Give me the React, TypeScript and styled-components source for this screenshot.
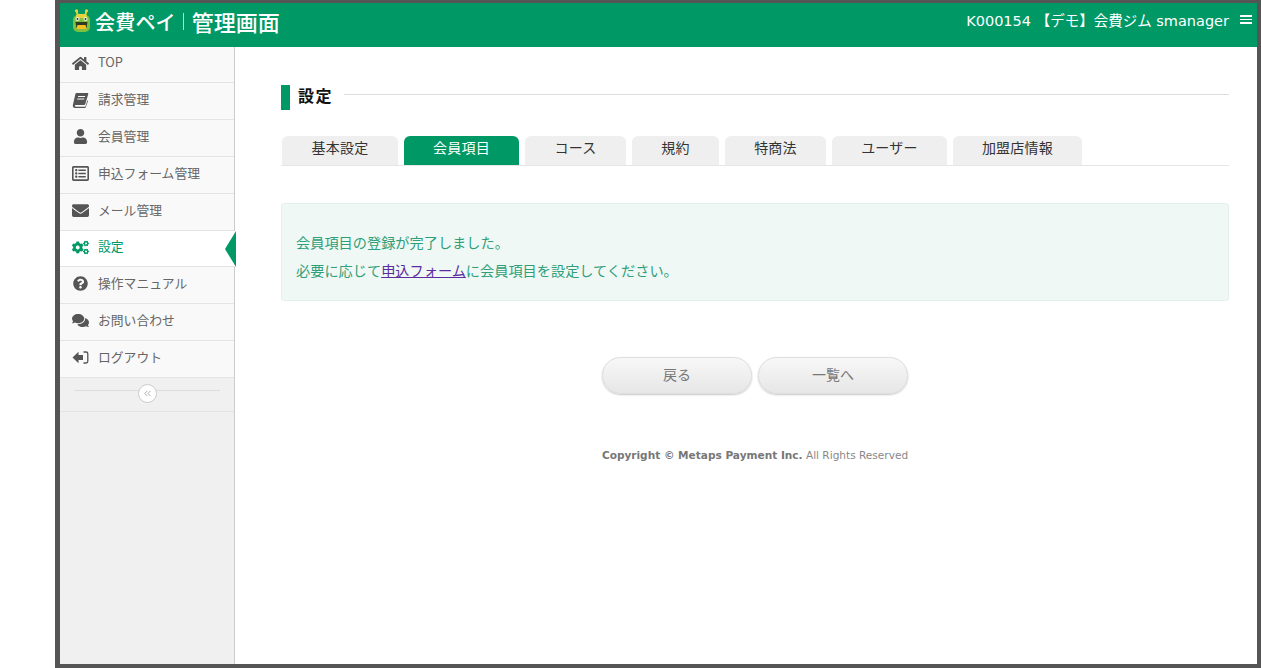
import React from "react";
import styled, { createGlobalStyle } from "styled-components";
import {
  FaHome,
  FaUser,
  FaRegListAlt,
  FaEnvelope,
  FaCogs,
  FaQuestionCircle,
  FaComments,
} from "react-icons/fa";
import { ChevronsLeft } from "lucide-react";

const GREEN = "#009966";
const FONT = `"DejaVu Sans", "Noto Sans CJK JP", sans-serif`;

const GlobalStyle = createGlobalStyle`
  html, body {
    margin: 0;
    padding: 0;
    background: #fff;
  }
  body {
    font-family: ${FONT};
    overflow: hidden;
  }
  * {
    box-sizing: border-box;
  }
`;

const Frame = styled.div`
  margin-left: 55px;
  width: 1206px;
  height: 668px;
  border-style: solid;
  border-color: #555;
  border-width: 3px 4px 4px 5px;
  display: flex;
  flex-direction: column;
  background: #fff;
`;

const Header = styled.header`
  height: 44px;
  flex: none;
  background: ${GREEN};
  display: flex;
  align-items: flex-start;
  justify-content: space-between;
  padding: 3px 5px 0 12px;
  color: #fff;
`;

const Logo = styled.div`
  display: flex;
  align-items: center;
  height: 30px;
  font-family: "Noto Sans CJK JP", sans-serif;
  font-size: 20px;
  font-weight: 500;
  letter-spacing: 0.2px;
  gap: 4px;
`;

const LogoDivider = styled.span`
  width: 1px;
  height: 17px;
  margin: 0 4px 0 3px;
  background: rgba(255, 255, 255, 0.7);
`;

const LogoAdmin = styled.span`
  font-size: 22px;
  letter-spacing: 0;
`;

const Account = styled.div`
  display: flex;
  align-items: center;
  height: 27px;
  font-size: 14.5px;
  gap: 11px;
`;

const Hamburger = styled.span`
  display: flex;
  flex-direction: column;
  gap: 2px;
  width: 12px;

  i {
    display: block;
    height: 1.5px;
    background: #fff;
  }
`;

const Body = styled.div`
  flex: 1;
  display: flex;
  min-height: 0;
`;

const Sidebar = styled.nav`
  width: 175px;
  flex: none;
  background: #f0f0f0;
  border-right: 1px solid #ccc;
  display: flex;
  flex-direction: column;
`;

const MenuItem = styled.a<{ $active?: boolean; $h: number }>`
  position: relative;
  height: ${(p) => p.$h}px;
  flex: none;
  display: flex;
  align-items: center;
  padding: 0 0 6px 12px;
  gap: 9px;
  font-family: "Noto Sans CJK JP", sans-serif;
  font-size: 12.8px;
  background: ${(p) => (p.$active ? "#fff" : "#f9f9f9")};
  color: ${(p) => (p.$active ? GREEN : "#666")};
  border-bottom: 1px solid #e4e4e4;
  margin-right: ${(p) => (p.$active ? "-1px" : "0")};
  svg {
    color: ${(p) => (p.$active ? GREEN : "#555")};
  }
`;

const IconSlot = styled.span`
  width: 17px;
  flex: none;
  display: flex;
  align-items: center;
  justify-content: center;
  font-size: 17px;
  padding-top: 3px;
`;

const ActiveArrow = styled.span`
  position: absolute;
  right: -1px;
  top: 0;
  width: 0;
  height: 0;
  border-style: solid;
  border-width: 18px 11px 18px 0;
  border-color: transparent ${GREEN} transparent transparent;
`;

const Collapse = styled.div`
  height: 34px;
  flex: none;
  position: relative;
  border-bottom: 1px solid #e4e4e4;
  padding: 12px 14px 0;
`;

const CollapseLine = styled.div`
  height: 1px;
  background: #ddd;
`;

const CollapseButton = styled.span`
  position: absolute;
  left: 78px;
  top: 6px;
  width: 19px;
  height: 19px;
  border-radius: 50%;
  border: 1px solid #ccc;
  background: #fff;
  display: flex;
  align-items: center;
  justify-content: center;

  svg {
    color: #888;
  }
`;

const Main = styled.main`
  flex: 1;
  padding: 38px 28px 0 46px;
  display: flex;
  flex-direction: column;
  min-width: 0;
`;

const Title = styled.div`
  display: flex;
  align-items: flex-start;
  height: 25px;
`;

const TitleBar = styled.span`
  width: 9px;
  height: 25px;
  background: ${GREEN};
  flex: none;
`;

const TitleText = styled.h2`
  margin: 0 11px 0 8px;
  font-family: "Noto Sans CJK JP", sans-serif;
  font-size: 16px;
  font-weight: 700;
  letter-spacing: 1.5px;
  line-height: 20px;
  color: #111;
`;

const TitleLine = styled.span`
  flex: 1;
  height: 1px;
  margin-top: 9px;
  background: #ddd;
`;

const Tabs = styled.div`
  margin-top: 26px;
  display: flex;
  gap: 6px;
  padding-left: 1px;
  height: 30px;
  border-bottom: 1px solid #e6e6e6;
`;

const Tab = styled.a<{ $active?: boolean; $w: number }>`
  width: ${(p) => p.$w}px;
  height: 29px;
  display: flex;
  align-items: center;
  justify-content: center;
  padding-bottom: 8px;
  border-radius: 6px 6px 0 0;
  font-family: "Noto Sans CJK JP", sans-serif;
  font-size: 14px;
  letter-spacing: 0.25px;
  background: ${(p) => (p.$active ? GREEN : "#efefef")};
  color: ${(p) => (p.$active ? "#fff" : "#333")};
`;

const Alert = styled.div`
  margin-top: 37px;
  height: 98px;
  padding: 24px 14px 0;
  background: #eff8f5;
  border: 1px solid #e3efeb;
  border-radius: 3px;
  color: #2f9f78;
  font-family: "Noto Sans CJK JP", sans-serif;
  font-size: 14.2px;
  line-height: 28px;

  p {
    margin: 0;
  }
  a {
    color: #5b2c9f;
    text-decoration: underline;
  }
`;

const Buttons = styled.div`
  margin-top: 56px;
  display: flex;
  justify-content: center;
  gap: 6px;
`;

const PillButton = styled.button`
  width: 150px;
  height: 37px;
  border-radius: 19px;
  border: 1px solid #ddd;
  background: linear-gradient(#f8f8f8, #e6e6e6);
  box-shadow: 0 1px 2px rgba(0, 0, 0, 0.22);
  color: #777;
  font-family: "Noto Sans CJK JP", sans-serif;
  font-size: 14px;
  padding: 0 0 4px;
`;

const Copyright = styled.div`
  margin-top: 55px;
  text-align: center;
  font-size: 10.55px;
  color: #888;

  b {
    color: #777;
  }
`;

const LogoMark = () => (
  <svg width="19" height="25" viewBox="0 0 19 25">
    <path d="M6 7 L4.5 2 M13 7 L14.5 2" stroke="#e8d23a" strokeWidth="1.8" fill="none" />
    <circle cx="4.5" cy="1.8" r="1.6" fill="#e8d23a" />
    <circle cx="14.5" cy="1.8" r="1.6" fill="#e8d23a" />
    <rect x="1" y="6" width="17" height="17" rx="5" fill="#7fbf3f" />
    <rect x="4" y="5" width="11" height="4" rx="2" fill="#e8d23a" />
    <circle cx="5.5" cy="10" r="2.1" fill="#e8f3d8" />
    <circle cx="13.5" cy="10" r="2.1" fill="#e8f3d8" />
    <circle cx="5.5" cy="10" r="0.9" fill="#234" />
    <circle cx="13.5" cy="10" r="0.9" fill="#234" />
    <path d="M3.5 13 H15.5 L14.5 19 H4.5 Z" fill="#2f3a22" />
    <path d="M5.5 16 H13.5 L14.5 20 H4.5 Z" fill="#f4c020" />
  </svg>
);

const BookIcon = () => (
  <svg width="17" height="16" viewBox="0 0 17 16">
    <path
      d="M4.6 1 H15.6 Q16.6 1 16.2 2.2 L13.2 12.2 Q13 13 12 13 H3.6 Q2.6 13 2.9 14 Q3.1 14.8 4.2 14.8 H13.4 L15.4 8.2 L16 9 L13.8 15.2 Q13.6 16 12.8 16 H3 Q1 16 0.7 13.8 L3.4 2 Q3.7 1 4.6 1 Z M6.2 4 L5.9 5 H12.9 L13.2 4 Z M5.4 6.6 L5.1 7.6 H12.1 L12.4 6.6 Z"
      fill="currentColor"
      fillRule="evenodd"
    />
  </svg>
);

const LogoutIcon = () => (
  <svg width="17" height="15" viewBox="0 0 17 15">
    <path d="M0.5 7.5 L6.5 1.8 V5 H11 V10 H6.5 V13.2 Z" fill="currentColor" />
    <path
      d="M11.5 2 H14 Q15.8 2 15.8 3.8 V11.2 Q15.8 13 14 13 H11.5"
      fill="none"
      stroke="currentColor"
      strokeWidth="1.3"
    />
  </svg>
);

const menu = [
  { label: "TOP", icon: <FaHome />, h: 36 },
  { label: "請求管理", icon: <BookIcon />, h: 37 },
  { label: "会員管理", icon: <FaUser size={15} />, h: 37 },
  { label: "申込フォーム管理", icon: <FaRegListAlt />, h: 37 },
  { label: "メール管理", icon: <FaEnvelope />, h: 37 },
  { label: "設定", icon: <FaCogs />, active: true, h: 36 },
  { label: "操作マニュアル", icon: <FaQuestionCircle size={15} />, h: 37 },
  { label: "お問い合わせ", icon: <FaComments />, h: 37 },
  { label: "ログアウト", icon: <LogoutIcon />, h: 37 },
];

const tabs = [
  { label: "基本設定", w: 116 },
  { label: "会員項目", w: 115, active: true },
  { label: "コース", w: 101 },
  { label: "規約", w: 87 },
  { label: "特商法", w: 101 },
  { label: "ユーザー", w: 115 },
  { label: "加盟店情報", w: 129 },
];

export default function App() {
  return (
    <>
      <GlobalStyle />
      <Frame>
        <Header>
          <Logo>
            <LogoMark />
            会費ペイ
            <LogoDivider />
            <LogoAdmin>管理画面</LogoAdmin>
          </Logo>
          <Account>
            <span>K000154 【デモ】会費ジム smanager</span>
            <Hamburger>
              <i />
              <i />
              <i />
            </Hamburger>
          </Account>
        </Header>
        <Body>
          <Sidebar>
            {menu.map((m) => (
              <MenuItem key={m.label} $active={m.active} $h={m.h}>
                <IconSlot>{m.icon}</IconSlot>
                {m.label}
                {m.active && <ActiveArrow />}
              </MenuItem>
            ))}
            <Collapse>
              <CollapseLine />
              <CollapseButton>
                <ChevronsLeft size={11} strokeWidth={1.5} />
              </CollapseButton>
            </Collapse>
          </Sidebar>
          <Main>
            <Title>
              <TitleBar />
              <TitleText>設定</TitleText>
              <TitleLine />
            </Title>
            <Tabs>
              {tabs.map((t) => (
                <Tab key={t.label} $w={t.w} $active={t.active}>
                  {t.label}
                </Tab>
              ))}
            </Tabs>
            <Alert>
              <p>会員項目の登録が完了しました。</p>
              <p>
                必要に応じて<a href="#form">申込フォーム</a>に会員項目を設定してください。
              </p>
            </Alert>
            <Buttons>
              <PillButton>戻る</PillButton>
              <PillButton>一覧へ</PillButton>
            </Buttons>
            <Copyright>
              <b>Copyright © Metaps Payment Inc.</b> All Rights Reserved
            </Copyright>
          </Main>
        </Body>
      </Frame>
    </>
  );
}
